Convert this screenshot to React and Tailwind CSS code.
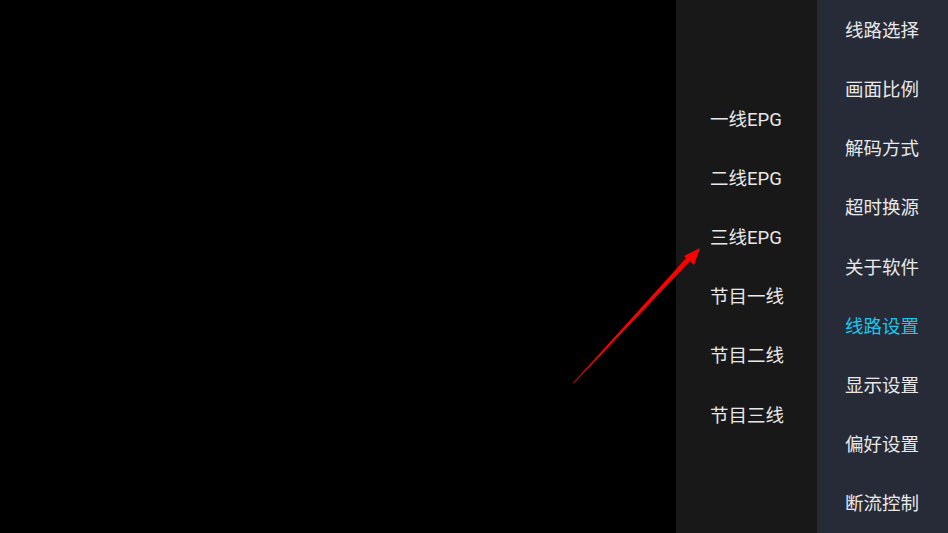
import React from 'react';

const lines = ['一线EPG', '二线EPG', '三线EPG', '节目一线', '节目二线', '节目三线'];
const menu = ['线路选择', '画面比例', '解码方式', '超时换源', '关于软件', '线路设置', '显示设置', '偏好设置', '断流控制'];

const Arrow = () => (
    <svg className="absolute left-0 top-0 pointer-events-none" width="948" height="533" viewBox="0 0 948 533">
        {/* tapered shaft */}
        <polygon points="573,383 573.6,383.4 691,260 688,256" fill="#ff0000" />
        {/* head */}
        <polygon points="700,248 684,256 694,265" fill="#ff0000" />
    </svg>
);

export default function App() {
    return (
        <div
            className="relative flex w-[948px] h-[533px] overflow-hidden bg-black"
            style={{ fontFamily: 'Roboto, "Noto Sans CJK SC", sans-serif' }}
        >
            {/* Video area */}
            <div className="flex-1 bg-black" />

            {/* Sub menu */}
            <div className="w-[141px] bg-[#181818] pt-[89px] flex flex-col">
                {lines.map((t) => (
                    <div key={t} className="h-[59.2px] flex items-center pl-[34px] pt-[4px] text-[18.5px] text-[#e8e8e8]">
                        {t}
                    </div>
                ))}
            </div>

            {/* Main menu */}
            <div className="w-[131px] bg-[#262b37] flex flex-col">
                {menu.map((t) => (
                    <div
                        key={t}
                        className={`flex-1 flex items-center pl-[28px] pt-[4px] text-[18.5px] ${t === '线路设置' ? 'text-[#1cc6ec]' : 'text-[#e8e8e8]'}`}
                    >
                        {t}
                    </div>
                ))}
            </div>

            <Arrow />
        </div>
    );
}
